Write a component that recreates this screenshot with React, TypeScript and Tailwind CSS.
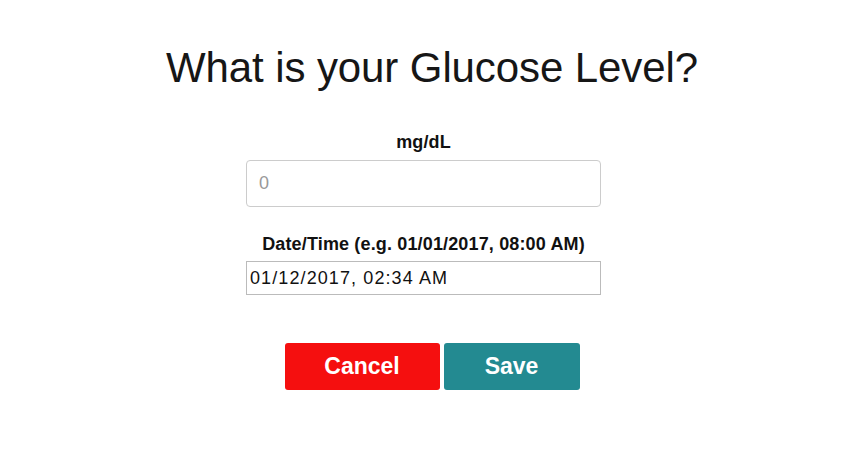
import React from "react";

const App = () => {
  return (
    <div className="w-[864px] h-[463px] bg-white flex flex-col items-center font-['Liberation_Sans',Arial,sans-serif] text-[#111]">
      {/* Title */}
      <h1 className="mt-[40px] text-[42px] leading-[56px] font-normal tracking-[-0.1px] text-[#161616]">
        What is your Glucose Level?
      </h1>

      {/* Form */}
      <div className="mr-[17px] flex flex-col items-center">
        <label className="mt-[34px] text-[18px] leading-[24px] font-bold tracking-[0.1px]">mg/dL</label>
        <input
          type="text"
          placeholder="0"
          className="mt-[6px] w-[355px] h-[47px] px-3 text-[18px] border border-[#ccc] rounded-[4px] placeholder-[#999] outline-none"
        />

        <label className="mt-[25px] text-[18px] leading-[24px] font-bold tracking-[0.15px]">
          Date/Time (e.g. 01/01/2017, 08:00 AM)
        </label>
        <input
          type="text"
          defaultValue="01/12/2017, 02:34 AM"
          className="mt-[5px] w-[355px] h-[34px] px-[3px] text-[18px] tracking-[1.1px] text-[#111] border border-[#bbb] outline-none"
        />
      </div>

      {/* Actions */}
      <div className="mt-[48px] flex gap-[4px]">
        <button className="w-[155px] h-[47px] rounded-[3px] bg-[#f50f0f] text-white text-[23px] font-bold">
          Cancel
        </button>
        <button className="w-[136px] h-[47px] rounded-[3px] bg-[#238a91] text-white text-[23px] font-bold">
          Save
        </button>
      </div>
    </div>
  );
};

export default App;
